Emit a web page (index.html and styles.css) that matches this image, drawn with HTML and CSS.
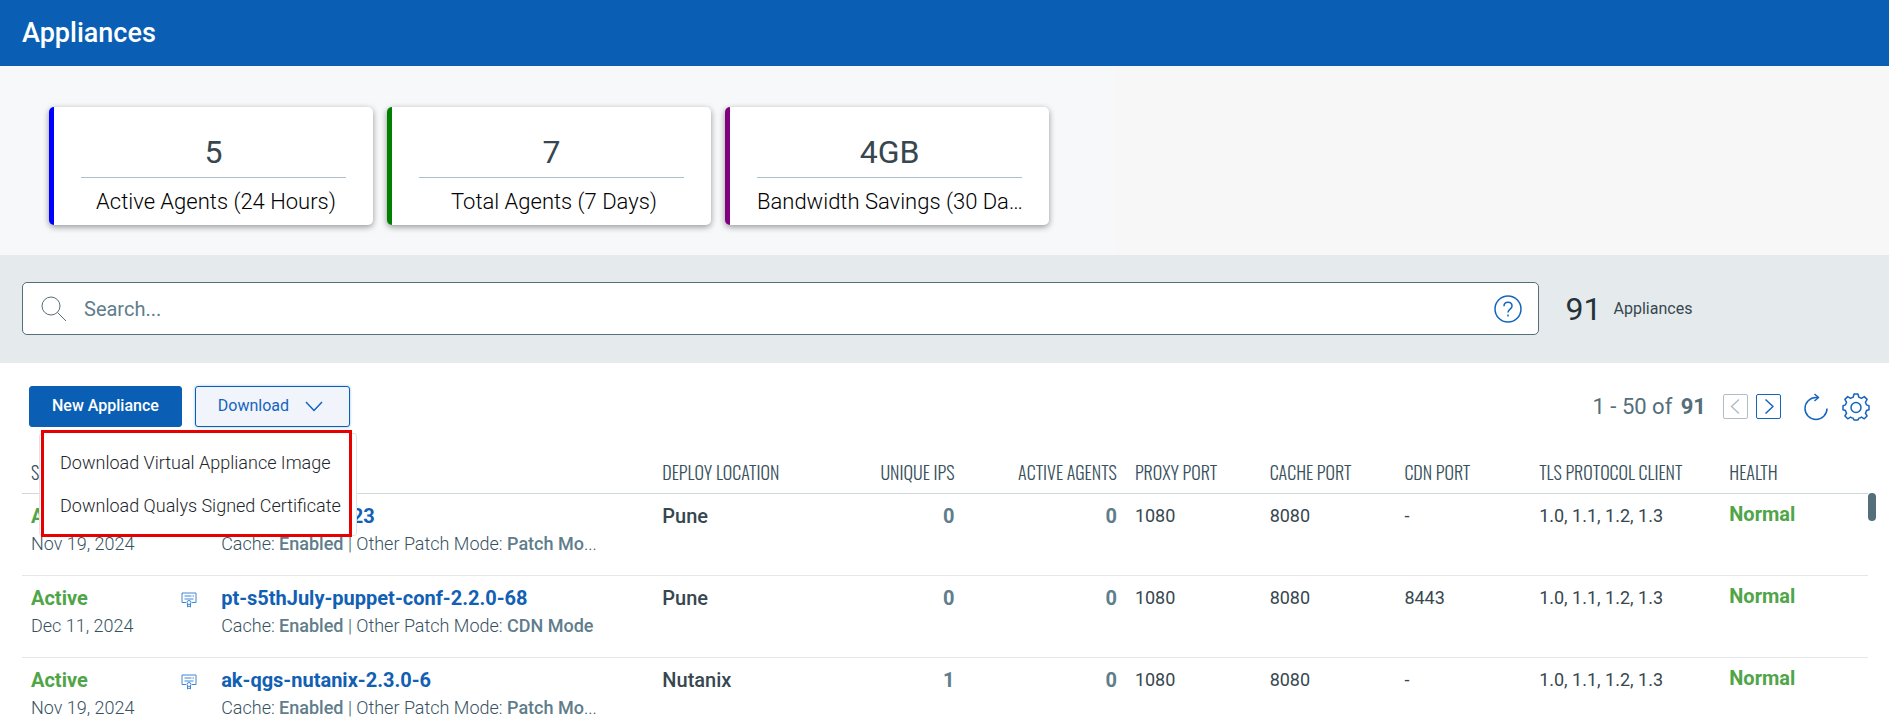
FILE: index.html
```html
<!DOCTYPE html>
<html lang="en">
<head>
<meta charset="utf-8">
<title>Appliances</title>
<link rel="stylesheet" href="styles.css">
</head>
<body>
<header class="topbar"><h1 class="topbar-title">Appliances</h1></header>

<section class="summary">
  <article class="card card-blue"><p class="card-value">5</p><p class="card-label">Active Agents (24 Hours)</p></article>
  <article class="card card-green"><p class="card-value">7</p><p class="card-label">Total Agents (7 Days)</p></article>
  <article class="card card-purple"><p class="card-value">4GB</p><p class="card-label">Bandwidth Savings (30 Days)</p></article>
</section>

<section class="searchbar">
  <div class="search">
    <svg class="search-icon" viewBox="0 0 26 26" aria-hidden="true"><circle cx="10" cy="10" r="9"/><path d="M16.500 16.500L25 25"/></svg>
    <input class="search-input" type="text" placeholder="Search..." aria-label="Search appliances">
    <button class="icon-button" type="button" aria-label="Help">
      <svg class="help-icon" viewBox="0 0 28 28"><circle cx="14" cy="14" r="13"/><path d="M10 11.200c0-5.200 8-5.200 8 0 0 3-4 2.800-4 6.300"/><path d="M14 19.500v2"/></svg>
    </button>
  </div>
  <p class="total"><span class="total-value">91</span><span class="total-label">Appliances</span></p>
</section>

<main class="content">
  <div class="toolbar">
    <div class="actions">
      <button class="button button-primary" type="button">New Appliance</button>
      <div class="dropdown">
        <button class="button button-outline" type="button" aria-expanded="true">Download
          <svg class="chevron" viewBox="0 0 18 12" aria-hidden="true"><path d="M1 2l8 8.500L17 2"/></svg>
        </button>
        <div class="menu">
          <div class="menu-list">
            <button class="menu-item" type="button">Download Virtual Appliance Image</button>
            <button class="menu-item" type="button">Download Qualys Signed Certificate</button>
          </div>
        </div>
      </div>
    </div>
    <div class="paging">
      <p class="range">1 - 50 of <strong class="range-total">91</strong></p>
      <button class="page-button page-button-off" type="button" aria-label="Previous page" disabled><svg class="page-icon" viewBox="0 0 23 23"><path d="M15 4.500L7.500 11.500l7.500 7"/></svg></button>
      <button class="page-button" type="button" aria-label="Next page"><svg class="page-icon" viewBox="0 0 23 23"><path d="M8.500 4.500l7.500 7-7.500 7"/></svg></button>
      <button class="icon-button refresh" type="button" aria-label="Refresh"><svg class="tool-icon" viewBox="0 0 28 28"><path d="M16.500 4.500H14A11 11 0 1 0 25 15.500"/><path d="M12.500 1l4 3.500-4 3.500"/></svg></button>
      <button class="icon-button" type="button" aria-label="Settings"><svg class="tool-icon" viewBox="0 0 28 28"><path d="M12 1h4l.8 3.200c1 .2 1.800.6 2.600 1.100l2.900-1.700 2.800 2.800-1.700 2.900c.5.800.9 1.600 1.100 2.600l2.500.8v4l-2.500.8c-.2 1-.6 1.800-1.100 2.600l1.700 2.900-2.800 2.800-2.900-1.700c-.8.500-1.600.9-2.600 1.100L16 27h-4l-.8-1.800c-1-.2-1.800-.6-2.600-1.100l-2.900 1.700L2.900 23l1.700-2.900c-.5-.8-.9-1.600-1.100-2.600L1 16.700v-4l2.500-.8c.2-1 .6-1.800 1.100-2.600L2.900 6.400l2.800-2.800 2.900 1.700c.8-.5 1.600-.9 2.600-1.100z"/><circle cx="14" cy="14.500" r="5"/></svg></button>
    </div>
  </div>

  <div class="table-wrap">
    <table class="grid">
      <colgroup>
        <col class="col-status"><col class="col-icon"><col class="col-name"><col class="col-deploy"><col class="col-count"><col class="col-count"><col class="col-port"><col class="col-port"><col class="col-port"><col class="col-tls"><col class="col-health">
      </colgroup>
      <thead>
        <tr><th>STATUS</th><th></th><th>NAME</th><th>DEPLOY LOCATION</th><th class="num">UNIQUE IPS</th><th class="num">ACTIVE AGENTS</th><th>PROXY PORT</th><th>CACHE PORT</th><th>CDN PORT</th><th>TLS PROTOCOL CLIENT</th><th>HEALTH</th></tr>
      </thead>
      <tbody>
        <tr>
          <td><span class="state">Active</span><span class="sub">Nov 19, 2024</span></td>
          <td></td>
          <td><a class="name" href="#">pt-s5thJuly-0-23</a><span class="sub">Cache: <b>Enabled</b> | Other Patch Mode: <b>Patch Mo</b>...</span></td>
          <td class="place">Pune</td><td class="num count">0</td><td class="num count">0</td><td>1080</td><td>8080</td><td>-</td><td>1.0, 1.1, 1.2, 1.3</td><td class="health">Normal</td>
        </tr>
        <tr>
          <td><span class="state">Active</span><span class="sub">Dec 11, 2024</span></td>
          <td><svg class="cert" viewBox="0 0 16 16" aria-hidden="true"><path d="M5 10.500H1V1h14v9.500h-4"/><path d="M3.500 4h7M3.500 7h9M11.500 4h1.500"/><circle cx="8" cy="10.500" r="2"/><path d="M6.500 12v3L8 14l1.500 1v-3"/></svg></td>
          <td><a class="name" href="#">pt-s5thJuly-puppet-conf-2.2.0-68</a><span class="sub">Cache: <b>Enabled</b> | Other Patch Mode: <b>CDN Mode</b></span></td>
          <td class="place">Pune</td><td class="num count">0</td><td class="num count">0</td><td>1080</td><td>8080</td><td>8443</td><td>1.0, 1.1, 1.2, 1.3</td><td class="health">Normal</td>
        </tr>
        <tr>
          <td><span class="state">Active</span><span class="sub">Nov 19, 2024</span></td>
          <td><svg class="cert" viewBox="0 0 16 16" aria-hidden="true"><path d="M5 10.500H1V1h14v9.500h-4"/><path d="M3.500 4h7M3.500 7h9M11.500 4h1.500"/><circle cx="8" cy="10.500" r="2"/><path d="M6.500 12v3L8 14l1.500 1v-3"/></svg></td>
          <td><a class="name" href="#">ak-qgs-nutanix-2.3.0-6</a><span class="sub">Cache: <b>Enabled</b> | Other Patch Mode: <b>Patch Mo</b>...</span></td>
          <td class="place">Nutanix</td><td class="num count">1</td><td class="num count">0</td><td>1080</td><td>8080</td><td>-</td><td>1.0, 1.1, 1.2, 1.3</td><td class="health">Normal</td>
        </tr>
      </tbody>
    </table>
    <div class="scroll-thumb"></div>
  </div>
</main>
</body>
</html>
```
FILE: styles.css
```css
* { box-sizing: border-box; }
html { height: 100%; overflow: hidden; }
body { margin: 0; min-height: 100%; background: #fff; color: #37474f; font: 18px/24px Roboto, sans-serif; }
p, h1 { margin: 0; }
button { font-family: inherit; margin: 0; padding: 0; cursor: pointer; }
svg { fill: none; stroke: currentColor; stroke-linejoin: round; display: block; }

.topbar { background: #0a5fb4; color: #fff; height: 66px; padding: 0 22px; display: flex; align-items: center; }
.topbar-title { font-size: 27px; line-height: 32px; font-weight: 500; }

.summary { background: linear-gradient(90deg, #f7f8fa 59%, #f7f7f7 59%); padding: 41px 49px 30px; display: flex; gap: 14px; }
.card { width: 324px; height: 118px; padding: 24px 27px 0; background: #fff; border-left: 5px solid; border-radius: 5px; box-shadow: 0 2px 6px rgba(0, 0, 0, .4); text-align: center; }
.card-blue { border-color: #00f; }
.card-green { border-color: #008000; }
.card-purple { border-color: #800080; }
.card-value { font-size: 32px; line-height: 42px; padding-bottom: 4px; border-bottom: 1px solid #b0bec5; color: #37474f; }
.card-label { margin-right: -5px; font-size: 22px; line-height: 48px; font-weight: 300; color: #000; white-space: nowrap; overflow: hidden; text-overflow: ellipsis; }

.searchbar { background: #e5eaed; height: 108px; padding: 27px 22px; display: flex; align-items: flex-start; }
.search { flex: 0 0 82.2%; height: 53px; padding: 0 16px 0 18px; background: #fff; border: 1px solid #546e7a; border-radius: 5px; display: flex; align-items: center; }
.search-icon { width: 26px; height: 26px; color: #546e7a; }
.search-input { flex: 1; min-width: 0; height: 40px; margin-left: 17px; padding: 0; border: 0; outline: 0; background: none; font: 20px/24px Roboto, sans-serif; color: #37474f; }
.search-input::placeholder { color: #607d8b; opacity: 1; }
.icon-button { border: 0; background: none; color: #1565c0; }
.help-icon { width: 28px; height: 28px; stroke-width: 1.5; }
.total { height: 53px; margin-left: 27px; display: flex; align-items: center; gap: 12px; }
.total-value { font-size: 32px; line-height: 40px; color: #263238; }
.total-label { font-size: 16px; color: #37474f; }

.content { padding: 23px 13px 0 22px; }
.toolbar { display: flex; justify-content: space-between; align-items: center; padding: 0 6px 0 7px; }
.actions { display: flex; gap: 13px; }
.button { height: 41px; border: 1px solid #0a5fb4; border-radius: 3px; font-size: 16px; line-height: 20px; padding: 0 22px 2px; display: flex; align-items: center; gap: 16px; }
.button-primary { background: #0a5fb4; color: #fff; font-weight: 500; }
.button-outline { background: #f1f4fa; color: #1565c0; padding-right: 26px; box-shadow: 0 0 3px #9fc0e6; }
.chevron { width: 18px; height: 12px; stroke-width: 1.5; }
.dropdown { position: relative; }
.menu { position: absolute; z-index: 2; top: 47px; right: -7px; width: 318px; background: #fff; border: 1px solid #dfe3e8; border-radius: 3px; }
.menu-list { margin: -4px 4px -2px 1px; padding: 8px 0 7px; background: #fff; border: 3px solid #e60000; }
.menu-item { display: block; width: 100%; height: 43px; padding: 0 16px; border: 0; background: none; color: #1c262b; font-size: 18px; font-weight: 300; line-height: 24px; text-align: left; white-space: nowrap; }

.paging { display: flex; align-items: center; }
.range { font-size: 22px; line-height: 28px; color: #546e7a; margin-right: 17px; }
.range-total { font-weight: 700; margin-left: 3px; }
.page-button { width: 25px; height: 25px; margin-right: 8px; border: 1px solid #1565c0; border-radius: 2px; background: none; color: #1565c0; }
.page-button-off { color: #b0bec5; border-color: #b0bec5; }
.page-icon { width: 23px; height: 23px; stroke-width: 1.5; }
.refresh { margin: 0 12px 0 13px; }
.tool-icon { width: 28px; height: 28px; stroke-width: 1.5; }

.table-wrap { display: flex; margin-top: 24px; }
.grid { flex: 1; min-width: 0; table-layout: fixed; border-collapse: collapse; }
.col-status { width: 8.1%; }
.col-icon { width: 2.2%; }
.col-name { width: 23.9%; }
.col-deploy { width: 8%; }
.col-count { width: 8.8%; }
.col-port { width: 7.3%; }
.col-tls { width: 10.3%; }
.col-health { width: 8%; }
.grid th { height: 42px; padding: 0 9px; border-bottom: 1px solid #cfd8dc; font: 300 18px/24px Oswald, "Roboto Condensed", "Liberation Sans Narrow", sans-serif; color: #37505c; text-align: left; white-space: nowrap; }
.grid td { height: 82px; padding: 10px 9px 0; border-bottom: 1px solid #e5e8ea; vertical-align: top; white-space: nowrap; }
.grid .num { text-align: right; }
.grid .place { font-weight: 500; font-size: 20px; }
.grid .count { font-weight: 700; font-size: 20px; color: #607d8b; }
.state, .grid .health { color: #4fa548; font-size: 20px; font-weight: 700; }
.grid .health { padding-top: 8px; }
.state, .sub, .name { display: block; }
.name { color: #1160b4; font-size: 20px; font-weight: 700; text-decoration: none; }
.sub { color: #37525f; font-weight: 300; margin-top: 4px; }
.sub b { font-weight: 500; color: #607d8b; }
.cert { width: 16px; height: 16px; margin-top: 6px; color: #3f86d4; }
.scroll-thumb { width: 8px; height: 28px; margin-top: 42px; border-radius: 4px; background: #546e7a; }
```
